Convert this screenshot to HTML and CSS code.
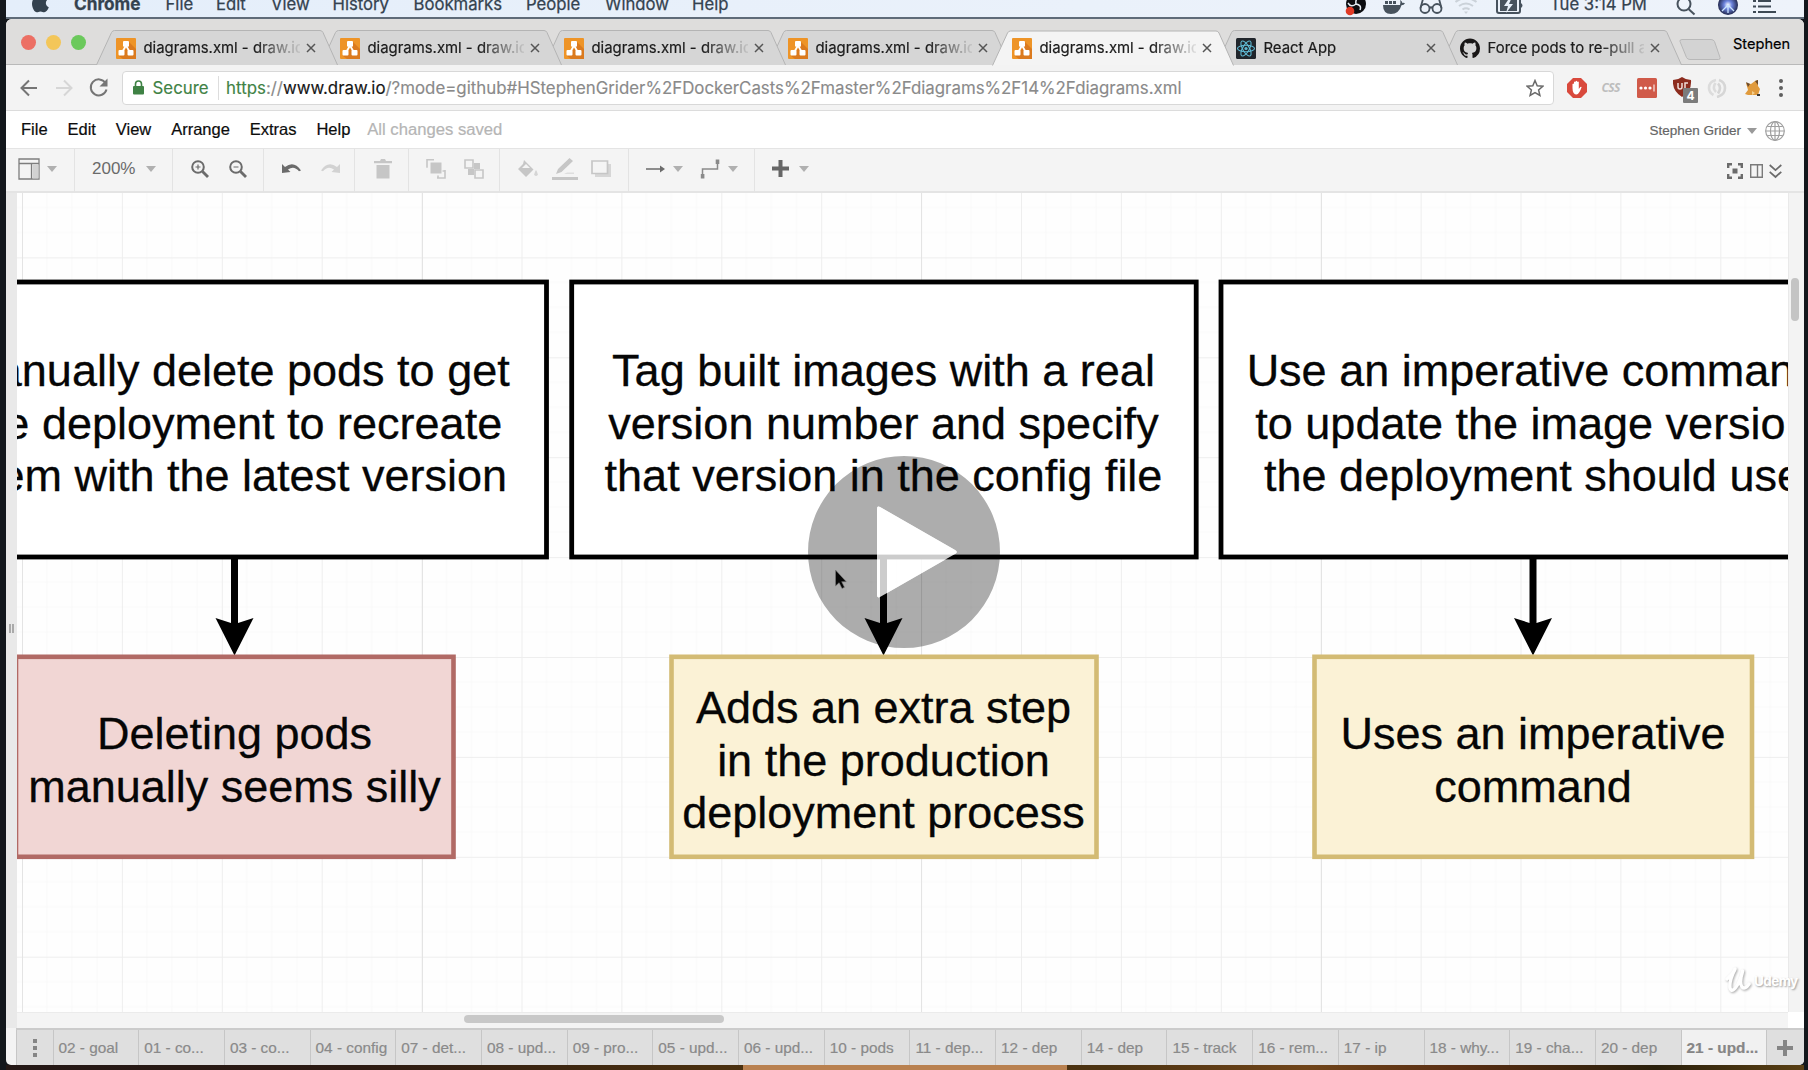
FILE: index.html
```html
<!DOCTYPE html>
<html lang="en">
<head>
<meta charset="utf-8">
<title>diagrams.xml - draw.io</title>
<link rel="stylesheet" href="styles.css">
</head>
<body>
<svg width="0" height="0" class="defs">
  <defs>
    <symbol id="drawio" viewBox="0 0 20 21"><rect width="20" height="21" rx="1" fill="#ee9427"/><path d="M12 3l8 8v10H7l-4-3 7-7z" fill="#db7a1e"/><path d="M10 7.5L6 14.500M10 7.500L14 14.500" stroke="#fff" stroke-width="1.800"/><rect x="7" y="3" width="6" height="5.800" rx="1" fill="#fff"/><rect x="2.500" y="12" width="6" height="5.500" rx="1" fill="#fff"/><rect x="11.500" y="12" width="6" height="5.500" rx="1" fill="#fff"/></symbol>
    <symbol id="close" viewBox="0 0 10 10"><path d="M1 1l8 8M9 1L1 9" stroke="#555" stroke-width="1.500"/></symbol>
    <symbol id="tab" viewBox="0 0 242 35"><path d="M.5 35L15.500 2.500Q16.500.5 18.500.5H224Q226 .5 227 2.500L241.500 35" stroke="#b4b4b4"/></symbol>
    <symbol id="caret" viewBox="0 0 10 6"><path d="M0 0h10L5 6z"/></symbol>
  </defs>
</svg>

<header class="mac-bar">
  <svg class="apple" width="17" height="22" viewBox="0 0 17 22" fill="#34424f"><path d="M12 6c2 0 3.500.8 4.300 2-3.800 2.300-2.900 7 .5 8.300C15.800 19 14 21.300 12.300 21.300c-1.500 0-2-.9-3.800-.9s-2.300.9-3.700.9C2.500 21.300 0 17 0 12.800 0 8.500 2.500 6.200 5 6.200c1.500 0 2.700.9 3.600.9S10.500 6 12 6z"/></svg>
  <b>Chrome</b><span>File</span><span>Edit</span><span>View</span><span>History</span><span>Bookmarks</span><span>People</span><span>Window</span><span>Help</span>
  <div class="mac-status">
    <svg width="22" height="22" viewBox="0 0 22 22"><circle cx="11" cy="10" r="10" fill="#0c0d10"/><path d="M11 10q-1-6 4-6M11 10q6 1 4 6M11 10q-5 4-8-1" fill="none" stroke="#e6edf3" stroke-width="1.500"/><circle cx="5" cy="17" r="4.300" fill="#e03a26"/></svg>
    <svg width="22" height="22" viewBox="0 0 22 22" fill="#47525d"><path d="M0 11h17q1-3 0-5 2 1 2.500 3 1.500-.5 2.500.3-1 2-3.500 2Q16 20 8 20 0 20 0 11zM2 7h3v3H2zM6 7h3v3H6zM10 7h3v3h-3z"/></svg>
    <svg width="24" height="22" viewBox="0 0 24 22" fill="none" stroke="#47525d" stroke-width="1.800"><circle cx="6" cy="14.500" r="4.500"/><circle cx="18" cy="14.500" r="4.500"/><path d="M10.500 14q1.500-1.500 3 0M1.500 14L4 5M22.500 14L20 5"/></svg>
    <svg width="24" height="22" viewBox="0 0 24 22" fill="none" stroke="#cbd2d9" stroke-width="2"><path d="M1.500 8q10.500-8 21 0M5 12q7-5 14 0M8.500 15.500q3.500-2.500 7 0"/><path d="M10 17.500h4l-2 2.500z" fill="#cbd2d9" stroke="none"/></svg>
    <svg width="28" height="22" viewBox="0 0 28 22"><rect x="1" y="4" width="23" height="15" rx="2" fill="none" stroke="#47525d" stroke-width="2"/><path d="M4 6h17v11H4zM25 9q3 2.500 0 5z" fill="#47525d"/><path d="M14 3l-6 9h4l-2 7 7-9h-4l3-7z" fill="#e9f1fa"/></svg>
    <time>Tue 3:14 PM</time>
    <svg width="20" height="22" viewBox="0 0 20 22" fill="none" stroke="#47525d" stroke-width="2"><circle cx="8" cy="10" r="6.500"/><path d="M12.500 15l6 5.500"/></svg>
    <svg width="22" height="22" viewBox="0 0 22 22"><defs><radialGradient id="siri"><stop offset="0" stop-color="#fff"/><stop offset=".4" stop-color="#6c83dd"/><stop offset="1" stop-color="#22294f"/></radialGradient></defs><circle cx="11" cy="11" r="10" fill="url(#siri)"/><path d="M11 11L5 17M11 11l6 6M11 11v8" stroke="#c9e3ff" stroke-width="1.300"/></svg>
    <svg width="23" height="22" viewBox="0 0 23 22" stroke="#3d4954" stroke-width="2.200"><path d="M0 7h3M5 7h13M0 12.500h3M5 12.500h13M0 18h3M5 18h18"/></svg>
  </div>
</header>

<main class="window">
  <div class="strip">
    <div class="lights"><i></i><i></i><i></i></div>
    <nav class="tabs">
      <div class="tab z5"><svg class="shape"><use href="#tab"/></svg><svg class="fav"><use href="#drawio"/></svg><span>diagrams.xml - draw.io</span><svg class="x"><use href="#close"/></svg></div>
      <div class="tab z4"><svg class="shape"><use href="#tab"/></svg><svg class="fav"><use href="#drawio"/></svg><span>diagrams.xml - draw.io</span><svg class="x"><use href="#close"/></svg></div>
      <div class="tab z3"><svg class="shape"><use href="#tab"/></svg><svg class="fav"><use href="#drawio"/></svg><span>diagrams.xml - draw.io</span><svg class="x"><use href="#close"/></svg></div>
      <div class="tab z2"><svg class="shape"><use href="#tab"/></svg><svg class="fav"><use href="#drawio"/></svg><span>diagrams.xml - draw.io</span><svg class="x"><use href="#close"/></svg></div>
      <div class="tab active"><svg class="shape"><use href="#tab"/></svg><svg class="fav"><use href="#drawio"/></svg><span>diagrams.xml - draw.io</span><svg class="x"><use href="#close"/></svg></div>
      <div class="tab z2"><svg class="shape"><use href="#tab"/></svg>
        <svg class="fav" viewBox="0 0 20 21"><rect width="20" height="21" rx="1.500" fill="#20252b"/><g fill="none" stroke="#5fb9d3" stroke-width="1.100"><ellipse cx="10" cy="10.500" rx="8.500" ry="3.300"/><ellipse cx="10" cy="10.500" rx="8.500" ry="3.300" transform="rotate(60 10 10.500)"/><ellipse cx="10" cy="10.500" rx="8.500" ry="3.300" transform="rotate(120 10 10.500)"/></g><circle cx="10" cy="10.500" r="1.600" fill="#5fb9d3"/></svg>
        <span>React App</span><svg class="x"><use href="#close"/></svg></div>
      <div class="tab z1"><svg class="shape"><use href="#tab"/></svg>
        <svg class="fav" viewBox="0 0 16 16"><path fill="#191717" d="M8 0C3.580 0 0 3.580 0 8c0 3.540 2.290 6.530 5.470 7.590.4.070.55-.17.55-.38 0-.19-.01-.82-.01-1.490-2.010.37-2.530-.49-2.690-.94-.09-.23-.48-.94-.82-1.130-.28-.15-.68-.52-.01-.53.63-.01 1.080.58 1.230.82.72 1.210 1.870.87 2.330.66.07-.52.28-.87.51-1.070-1.780-.2-3.640-.89-3.640-3.950 0-.87.31-1.590.82-2.150-.08-.2-.36-1.020.08-2.120 0 0 .67-.21 2.200.82.64-.18 1.320-.27 2-.27s1.360.09 2 .27c1.530-1.040 2.200-.82 2.200-.82.44 1.100.16 1.920.08 2.120.51.56.82 1.270.82 2.150 0 3.070-1.870 3.750-3.650 3.950.29.25.54.73.54 1.480 0 1.070-.01 1.930-.01 2.200 0 .21.15.46.55.38A8.010 8.010 0 0016 8c0-4.420-3.580-8-8-8z"/></svg>
        <span>Force pods to re-pull always</span><svg class="x"><use href="#close"/></svg></div>
    </nav>
    <svg class="newtab" width="42" height="21" viewBox="0 0 42 21"><path d="M3 .5h29q2.500 0 3.500 2l5.500 16q.5 2-1.500 2H11q-2.500 0-3.500-2L1 2.500Q.5.500 3 .5z" fill="#d3d3d3" stroke="#b8b8b8"/></svg>
    <span class="profile">Stephen</span>
  </div>

  <div class="address">
    <svg class="nav-icons" width="92" height="24" viewBox="0 0 92 24" fill="none" stroke-width="2"><path d="M17 12H2.500M9 4.500L1.500 12 9 19.500" stroke="#757575"/><path d="M36 12h14.500M44 4.500l7.500 7.500-7.500 7.500" stroke="#d6d6d6"/><path d="M85.500 7A8 8 0 1 0 86.500 13.500" stroke="#757575"/><path d="M87.500 2.500v8h-8z" fill="#757575"/></svg>
    <div class="url">
      <svg width="11" height="15" viewBox="0 0 11 15"><rect y="6" width="11" height="8.500" rx="1" fill="#3f8245"/><path d="M2.500 7V4a3 3 0 0 1 6 0v3" fill="none" stroke="#3f8245" stroke-width="1.600"/></svg>
      <span class="secure">Secure</span>
      <span class="link"><em>https</em>://<strong>www.draw.io</strong>/?mode=github#HStephenGrider%2FDockerCasts%2Fmaster%2Fdiagrams%2F14%2Fdiagrams.xml</span>
      <svg class="star" width="18" height="18" viewBox="0 0 18 18"><path d="M9 1.500l2.200 5.200 5.600.5-4.200 3.700 1.300 5.500L9 13.500l-4.900 2.900 1.300-5.500L1.200 7.200l5.600-.5z" fill="none" stroke="#6a6a6a" stroke-width="1.500"/></svg>
    </div>
    <div class="extensions">
      <svg width="20" height="20" viewBox="0 0 20 20"><path d="M6 0h8l6 6v8l-6 6H6l-6-6V6z" fill="#d9493c"/><path d="M5.500 10V6q1-1 1.500 0v3V4q1-1 1.600 0v4.500V3.300q1-1 1.600 0v5.200V4q1-1 1.600 0v7l1.500-2q1.400-.6 1.200.6-2 6-4.700 7-4.300 0-4.300-6.600z" fill="#fff"/></svg>
      <span class="css">CSS</span>
      <svg width="20" height="20" viewBox="0 0 20 20"><rect width="20" height="20" rx="1.500" fill="#d05a49"/><g fill="#fff"><circle cx="4" cy="10" r="1.600"/><circle cx="8.500" cy="10" r="1.600"/><circle cx="13" cy="10" r="1.600"/><path d="M16.500 6.500h1v7h-1z"/></g></svg>
      <svg width="26" height="26" viewBox="0 0 26 26"><path d="M0 3q5 0 9-3 4 3 9 3 1 11-9 17Q-1 14 0 3z" fill="#8c2c1e"/><path d="M5 6v4q0 2 2 2t2-2V6M12 12V6h3" fill="none" stroke="#f0dcd8" stroke-width="1.500"/><rect x="10" y="11" width="15" height="15" rx="1" fill="#7b7b7b"/><text x="17.500" y="23" class="count">4</text></svg>
      <svg width="20" height="20" viewBox="0 0 20 20" fill="none" stroke-width="2.600"><path d="M9 2Q2 3.500 2 10q0 4.500 4.500 7M8.500 5q-3.500 5 .5 9" stroke="#dcdcdc"/><path d="M12 2q6 2 6 8 0 7-8 9M11 5.500q4 4 0 10" stroke="#d6d6d6"/></svg>
      <svg width="16" height="18" viewBox="0 0 16 18"><path d="M1 4l5 1 4-3 3-1v6l2 3-2 6H3L0 15l3-4z" fill="#e09a3c"/><path d="M1 3l4 2-2 3zM10 2l3-1v5z" fill="#6b4a2c"/><path d="M7 12l3 2-3 2z" fill="#f4cf8e"/><path d="M12 15h3v2h-3z" fill="#3c3a38"/></svg>
      <svg width="4" height="18" viewBox="0 0 4 18" fill="#5f5f5f"><circle cx="2" cy="2" r="2"/><circle cx="2" cy="9" r="2"/><circle cx="2" cy="16" r="2"/></svg>
    </div>
  </div>

  <div class="menu">
    <span>File</span><span>Edit</span><span>View</span><span>Arrange</span><span>Extras</span><span>Help</span><span class="saved">All changes saved</span>
    <div class="user">Stephen Grider
      <svg class="caret"><use href="#caret"/></svg>
      <svg width="20" height="20" viewBox="0 0 20 20" fill="none" stroke="#a0a0a0" stroke-width="1.200"><circle cx="10" cy="10" r="9.300"/><ellipse cx="10" cy="10" rx="4.500" ry="9.300"/><path d="M10 .7v18.600M.7 10h18.600M2.300 5.500h15.400M2.300 14.500h15.400"/></svg>
    </div>
  </div>

  <div class="toolbar">
    <div class="group g1"><svg width="22" height="22" viewBox="0 0 22 22" fill="none" stroke="#7d7d7d" stroke-width="1.300"><path d="M1 1h20v20H1zM1 5.500h20M13.500 5.500V21"/><path d="M14.500 6.500h6v14h-6z" fill="#d2d2d2" stroke="none"/></svg><svg class="caret"><use href="#caret"/></svg></div>
    <div class="group g2"><span>200%</span><svg class="caret"><use href="#caret"/></svg></div>
    <div class="group g3">
      <svg width="18" height="18" viewBox="0 0 18 18" fill="none" stroke="#6b6b6b"><circle cx="7" cy="7" r="5.800" stroke-width="2"/><path d="M11.500 11.500l5.500 5.500" stroke-width="2.800"/><path d="M4.500 7h5M7 4.500v5" stroke-width="1.200"/></svg>
      <svg width="18" height="18" viewBox="0 0 18 18" fill="none" stroke="#6b6b6b"><circle cx="7" cy="7" r="5.800" stroke-width="2"/><path d="M11.500 11.500l5.500 5.500" stroke-width="2.800"/><path d="M4.500 7h5" stroke-width="1.200"/></svg>
    </div>
    <div class="group g4">
      <svg width="20" height="12" viewBox="0 0 20 12"><path d="M0 1l3 3Q12-3 19 7.500l-2 .8Q12 2 6 6.500L8.500 9 0 10z" fill="#6b6b6b"/></svg>
      <svg width="20" height="12" viewBox="0 0 20 12"><path d="M20 1l-3 3Q8-3 1 7.500l2 .8Q8 2 14 6.500L11.500 9l8.500 1z" fill="#d2d2d2"/></svg>
    </div>
    <div class="group g5"><svg width="18" height="20" viewBox="0 0 18 20" fill="#c6c6c6"><path d="M0 2h6l1-2h4l1 2h6v2.200H0zM2.500 6h13v13.500h-13z"/></svg></div>
    <div class="group g6">
      <svg width="20" height="20" viewBox="0 0 20 20"><path d="M4.500 3.500h11v11h-11z" fill="#c6c6c6"/><path d="M8 .8H1v8M19 11v8h-8M19 12h-2.500M12 19v-2.500" fill="none" stroke="#c6c6c6" stroke-width="1.600"/></svg>
      <svg width="20" height="20" viewBox="0 0 20 20" fill="none" stroke="#c6c6c6" stroke-width="1.600"><path d="M1 1h8v8H1zM11 11h8v8h-8z"/><path d="M10 4h6v6h-6v6H4v-6h6z" fill="#c6c6c6" stroke="none"/></svg>
    </div>
    <div class="group g7">
      <svg width="22" height="20" viewBox="0 0 22 20"><path d="M7 1l9.500 9.500-7.500 7.500L1 10l5-5z" fill="#c6c6c6"/><path d="M5 9l4-4 4 4z" fill="#f4f4f4"/><path d="M19 11q3.500 5.500 0 6-3.500-.5 0-6z" fill="#d5d5d5"/></svg>
      <svg width="26" height="22" viewBox="0 0 26 22" fill="#c6c6c6"><path d="M4 16l2-5L17.500 0l3.500 3L9.500 14zM0 19h26v3H0z"/><path d="M12 16l3-1.500h7V16z" fill="#dedede"/></svg>
      <svg width="20" height="17" viewBox="0 0 20 17"><path d="M4 4h16v13H4z" fill="#d6d6d6"/><path d="M1 1h15.500v12.500H1z" fill="#f4f4f4" stroke="#c6c6c6" stroke-width="1.700"/></svg>
    </div>
    <div class="group g8">
      <svg width="19" height="8" viewBox="0 0 19 8"><path d="M0 4h15" stroke="#6b6b6b" stroke-width="1.500"/><path d="M14 .5l5 3.500-5 3.500z" fill="#6b6b6b"/></svg><svg class="caret"><use href="#caret"/></svg>
      <svg class="conn" width="20" height="20" viewBox="0 0 20 20"><path d="M2.500 17v-7h15V3" fill="none" stroke="#8a8a8a" stroke-width="1.500"/><rect x=".8" y="15" width="3.600" height="4.500" fill="#8a8a8a"/><rect x="15.700" y=".5" width="3.600" height="4.500" fill="#8a8a8a"/></svg><svg class="caret"><use href="#caret"/></svg>
    </div>
    <div class="group g9"><svg width="17" height="17" viewBox="0 0 17 17"><path d="M8.500 0v17M0 8.500h17" stroke="#666" stroke-width="4"/></svg><svg class="caret"><use href="#caret"/></svg></div>
    <div class="view-tools">
      <svg width="16" height="16" viewBox="0 0 16 16" fill="none" stroke="#6b6b6b" stroke-width="2.400"><path d="M1.200 5V1.200H5M11 1.200h3.800V5M14.800 11v3.800H11M5 14.800H1.200V11"/><path d="M5.500 5.500h5v5h-5z" fill="#6b6b6b" stroke="none"/></svg>
      <svg width="13" height="14" viewBox="0 0 13 14" fill="none" stroke="#7a7a7a" stroke-width="1.400"><path d="M.7.7h11.600v12.600H.7zM7.500.7v12.600"/></svg>
      <svg width="13" height="15" viewBox="0 0 13 15" fill="none" stroke="#6b6b6b" stroke-width="1.700"><path d="M.7 1l5.800 5.200L12.300 1M.7 7.800L6.500 13l5.800-5.200"/></svg>
    </div>
  </div>

  <div class="workspace">
    <div class="splitter"><i></i><i></i></div>
    <svg class="diagram" viewBox="17 193 1771 819">
      <defs>
        <pattern id="grid" x="22" y="157.500" width="99.900" height="99.900" patternUnits="userSpaceOnUse">
          <path d="M25 0v99.900M50 0v99.900M75 0v99.900M0 25h99.900M0 50h99.900M0 75h99.900" stroke="#f9f9f9"/>
          <path d="M.5 0v99.900M0 .5h99.900" stroke="#eee"/>
        </pattern>
      </defs>
      <rect x="17" y="193" width="1771" height="819" fill="#fefefe"/>
      <rect x="17" y="193" width="1771" height="819" fill="url(#grid)"/>
      <path class="page-edge" d="M22.500 193v819M122.500 0M422.500 193v819M921.500 193v819M1321.500 193v819"/>
      <g class="option">
        <rect x="-79" y="282" width="625.500" height="275"/>
        <rect x="571.700" y="282" width="624.500" height="275"/>
        <rect x="1221" y="282" width="626" height="275"/>
      </g>
      <g class="arrow">
        <path d="M231 557v66l-15.500-5L234.500 655.500 253.500 618l-15.500 5v-66z"/>
        <path d="M880 557v66l-15.500-5L883.500 655.500 902.500 618l-15.500 5v-66z"/>
        <path d="M1529.500 557v66l-15.500-5L1533 655.500 1552 618l-15.500 5v-66z"/>
      </g>
      <rect class="bad" x="16" y="656.800" width="437.500" height="200"/>
      <rect class="ok" x="671.500" y="656.800" width="425" height="200"/>
      <rect class="ok" x="1314.500" y="656.800" width="437.500" height="200"/>
      <g class="label">
        <text x="234.500" y="385.900">Manually delete pods to get</text><text x="234.500" y="438.500">the deployment to recreate</text><text x="234.500" y="491">them with the latest version</text>
        <text x="883.500" y="385.900">Tag built images with a real</text><text x="883.500" y="438.500">version number and specify</text><text x="883.500" y="491">that version in the config file</text>
        <text x="1533" y="385.900">Use an imperative command</text><text x="1533" y="438.500">to update the image version</text><text x="1533" y="491">the deployment should use</text>
        <text x="234.500" y="749.300">Deleting pods</text><text x="234.500" y="801.900">manually seems silly</text>
        <text x="883.500" y="723">Adds an extra step</text><text x="883.500" y="775.600">in the production</text><text x="883.500" y="828.200">deployment process</text>
        <text x="1533" y="749.300">Uses an imperative</text><text x="1533" y="801.900">command</text>
      </g>
      <path d="M835.500 570v16l3.600-3.300 2.900 5.800 2.500-1.200-2.800-5.600h4.600z" fill="#0a0a0a" stroke="#b9b9b9" stroke-width=".6"/>
      <path fill-rule="evenodd" fill="#000" fill-opacity=".322" d="M904 456a96 96 0 1 0 0 192 96 96 0 0 0 0-192zM877 509q0-3.500 3-2l75 43q3.500 2 0 4l-75 43q-3 1.500-3-2z"/>
      <path fill="#fff" fill-opacity=".8" d="M877 509q0-3.500 3-2l75 43q3.500 2 0 4l-75 43q-3 1.500-3-2z"/>
    </svg>
    <div class="vscroll"><i></i></div>
    <div class="hscroll"><i></i></div>
    <div class="corner"></div>
    <div class="watermark">
      <svg width="26" height="27" viewBox="0 0 26 27"><path d="M2 12Q9 6 10 2 4 14 5 21q2 6 8-4Q17 9 17.500 4 14 16 17 20q3 3 7-3" fill="none" stroke="#fff" stroke-width="3.400" stroke-linecap="round" stroke-linejoin="round"/></svg>
      <span>Udemy</span>
    </div>
  </div>

  <footer class="pages">
    <div class="more"><svg width="4" height="18" viewBox="0 0 4 18" fill="#858585"><path d="M0 0h4v4H0zM0 7h4v4H0zM0 14h4v4H0z"/></svg></div>
    <span>02 - goal</span><span>01 - co...</span><span>03 - co...</span><span>04 - config</span><span>07 - det...</span><span>08 - upd...</span><span>09 - pro...</span><span>05 - upd...</span><span>06 - upd...</span><span>10 - pods</span><span>11 - dep...</span><span>12 - dep</span><span>14 - dep</span><span>15 - track</span><span>16 - rem...</span><span>17 - ip</span><span>18 - why...</span><span>19 - cha...</span><span>20 - dep</span><span class="current">21 - upd...</span>
    <div class="add"><svg width="16" height="16" viewBox="0 0 16 16"><path d="M8 0v16M0 8h16" stroke="#858585" stroke-width="4"/></svg></div>
  </footer>
</main>
<div class="dock"></div>
</body>
</html>
```
FILE: styles.css
```css
* { box-sizing: border-box; }
body {
  margin: 0;
  width: 1808px;
  height: 1070px;
  overflow: hidden;
  padding: 0 4px 0 6px;
  display: flex;
  flex-direction: column;
  background: #13171c;
  font-family: "Liberation Sans", Arial, sans-serif;
}
svg { display: block; flex: none; }
.defs { position: absolute; }

/* system menu bar, scrolled partly off the top */
.mac-bar {
  flex: none;
  height: 19px;
  padding-left: 26px;
  display: grid;
  grid-template-columns: 42px 91.5px 50.5px 55px 61.5px 81px 112.5px 79px 87px 60px 1fr;
  grid-template-rows: 17px;
  background: linear-gradient(90deg, #e4eefa, #eef3fa);
  border-bottom: 2px solid #5f6b78;
  color: #34424f;
  font: 16.7px/20px Inter, sans-serif;
  overflow: hidden;
}
.mac-bar > b, .mac-bar > span, .mac-bar time { margin-top: -6px; white-space: nowrap; -webkit-text-stroke: .25px; }
.mac-bar b { font-size: 17.2px; }
.mac-bar .mac-status time { margin-top: 0; }
.apple { margin-top: -9px; }
.mac-status { display: flex; margin: -6px 28px 0 0; justify-content: flex-end; height: 22px; }
.mac-status time { margin: 0 29px 0 26px; width: 97px; }
.mac-status svg + svg { margin-left: 16px; }
.mac-status svg:nth-of-type(3) { margin-left: 14px; }
.mac-status svg:nth-of-type(4) { margin-left: 11px; }
.mac-status svg:nth-of-type(5) { margin-left: 18px; }
.mac-status svg:nth-of-type(7) { margin-left: 21px; }
.mac-status svg:nth-of-type(8) { margin-left: 14px; }

.window {
  flex: none;
  height: 1046px;
  display: flex;
  flex-direction: column;
  border-radius: 6px 6px 5px 5px;
  overflow: hidden;
  background: #f3f3f3;
}

/* browser tabs */
.strip {
  flex: none;
  height: 46px;
  padding-top: 11px;
  display: flex;
  background: #dedddc;
  border-bottom: 1px solid #b9b9b9;
}
.lights { width: 90px; padding: 5px 0 0 15px; display: flex; gap: 10px; }
.lights i { width: 15px; height: 15px; border-radius: 50%; background: #ec6f64; }
.lights i:nth-child(2) { background: #f3c659; }
.lights i:nth-child(3) { background: #6bc95c; }
.tabs { display: flex; height: 35px; }
.tab {
  position: relative;
  width: 242px;
  height: 35px;
  margin-right: -18px;
  padding: 1px 0 0 20px;
  display: flex;
  align-items: center;
  font: 14.9px/20px Inter, sans-serif;
  color: #1b1b1b;
  -webkit-text-stroke: .2px;
}
.tab > * { position: relative; }
.tab .shape { position: absolute; left: 0; top: 0; width: 242px; height: 35px; fill: #d6d6d6; }
.tab .fav { width: 20px; height: 21px; }
.tab span {
  width: 156px;
  margin-left: 7.5px;
  overflow: hidden;
  white-space: nowrap;
  -webkit-mask-image: linear-gradient(90deg, #000 112px, transparent 160px);
  mask-image: linear-gradient(90deg, #000 112px, transparent 160px);
}
.tab .x { width: 10px; height: 10px; margin-left: 6.5px; }
.z5 { z-index: 5; } .z4 { z-index: 4; } .z3 { z-index: 3; } .z2 { z-index: 2; } .z1 { z-index: 1; }
.tab.active { z-index: 9; }
.tab.active .shape { fill: #f4f4f4; height: 36px; }
.newtab { margin: 9px 0 0 15px; }
.profile { margin: 5px 0 0 12px; font: 14.6px/18px Inter, sans-serif; -webkit-text-stroke: .2px; }

/* address row */
.address { flex: none; height: 46px; display: flex; align-items: center; padding: 0 20px 0 14px; border-bottom: 1px solid #dcdcdc; }
.nav-icons { margin-right: 9.5px; }
.url {
  width: 1432px;
  height: 34px;
  padding: 0 9px 0 10px;
  display: flex;
  align-items: center;
  background: #fff;
  border: 1px solid #d8d8d8;
  border-radius: 4px;
  font: 16.85px/24px Inter, sans-serif;
  color: #8a8a8a;
}
.secure { margin-left: 9px; padding-right: 9px; border-right: 1px solid #ddd; color: #3f8245; -webkit-text-stroke: .15px; }
.link { margin-left: 7.5px; white-space: nowrap; -webkit-text-stroke: .15px; }
.link em { font-style: normal; color: #3f8245; }
.link strong { font-weight: 400; color: #161616; }
.star { margin-left: auto; }
.extensions { flex: 1; display: flex; align-items: center; margin-left: 13px; }
.css { margin: 0 15px 0 15px; color: #bdbdbd; font: italic bold 12px/16px "Open Sans", sans-serif; letter-spacing: -.6px; width: 20px; }
.extensions svg:nth-of-type(3) { margin: 5px 0 0 16px; }
.extensions svg:nth-of-type(4) { margin-left: 8px; }
.extensions svg:nth-of-type(5) { margin-left: 18px; }
.extensions svg:nth-of-type(6) { margin-left: auto; margin-right: 1px; }
.count { fill: #fff; font: bold 12px Inter, sans-serif; text-anchor: middle; }

/* draw.io menu */
.menu {
  flex: none;
  height: 38px;
  padding: 0 19px 0 15px;
  display: flex;
  align-items: center;
  gap: 19.9px;
  background: #fff;
  border-bottom: 1px solid #e4e4e4;
  font-size: 16.5px;
  color: #0c0c0c;
  -webkit-text-stroke: .2px;
}
.saved { margin-left: -3px; color: #b5b5b5; font-size: 16.65px; }
.user { margin-left: auto; display: flex; align-items: center; font-size: 13.5px; color: #666; padding-top: 2px; }
.caret { width: 10px; height: 6px; fill: #b0b0b0; }
.user .caret { margin: 0 8px 0 6px; fill: #999; }

.toolbar { flex: none; height: 44px; display: flex; background: #f4f4f4; border-bottom: 2px solid #e4e4e4; color: #6a6a6a; font-size: 17px; }
.group { height: 43px; padding-bottom: 4px; display: flex; align-items: center; border-right: 1px solid #e3e3e3; }
.g1 { width: 69px; padding-left: 12px; gap: 7px; }
.g2 { width: 98px; padding-left: 17px; gap: 11px; }
.g3 { width: 91px; padding-left: 18px; gap: 20px; }
.g4 { width: 91px; padding-left: 18px; gap: 18px; }
.g5 { width: 54px; padding-left: 19px; }
.g6 { width: 91px; padding-left: 17px; gap: 18px; }
.g7 { width: 129px; padding-left: 17px; gap: 13px; }
.g8 { width: 126px; padding-left: 17px; gap: 8px; }
.g8 .conn { margin-left: 9px; }
.g9 { padding-left: 17px; gap: 10px; border: 0; }
.view-tools { margin-left: auto; padding: 2px 22px 0 0; display: flex; align-items: center; gap: 6.5px; }

/* drawing surface */
.workspace {
  flex: none;
  height: 835px;
  position: relative;
  display: grid;
  grid-template: 819px 16px / 11px 1771px 1fr;
  background: #e9e9e9;
}
.splitter { grid-row: 1 / 3; display: flex; justify-content: center; align-items: center; gap: 1px; padding-top: 36px; background: #e9e9e9; }
.splitter i { width: 2px; height: 9px; background: #aaa; }
.diagram { width: 1771px; height: 819px; overflow: hidden; }
.page-edge { stroke: #e4e4e4; }
.option rect { fill: #fff; stroke: #000; stroke-width: 4.8px; }
.bad { fill: #f1d6d4; stroke: #b16a65; stroke-width: 4.6px; }
.ok { fill: #fbf2d6; stroke: #d3bb74; stroke-width: 4.6px; }
.arrow { fill: #000; }
.label { font-size: 45px; text-anchor: middle; fill: #060606; stroke: #060606; stroke-width: .3px; }
.vscroll { background: #f3f3f3; border-left: 1px solid #e9e9e9; padding: 85px 0 0 2px; }
.vscroll i { display: block; width: 8px; height: 43px; border-radius: 4px; background: #c4c4c4; }
.hscroll { grid-column: 2; background: #f4f4f4; border-top: 1px solid #ebebeb; padding: 2px 0 0 447px; }
.hscroll i { display: block; width: 260px; height: 8px; border-radius: 4px; background: #c8c8c8; }
.corner { background: #fff; }
.watermark {
  position: absolute;
  left: 1719px;
  top: 774px;
  display: flex;
  align-items: center;
  gap: 3px;
  color: #fff;
  font: bold 13.5px/20px Inter, sans-serif;
  letter-spacing: -.6px;
  text-shadow: 1px 1px 2px #999;
}
.watermark svg { filter: drop-shadow(1px 1px 1px #aaa); }

/* page tabs */
.pages {
  flex: none;
  height: 37px;
  margin-left: 10px;
  display: flex;
  background: #dfdfdf;
  border-top: 2px solid #cbcbcb;
  color: #8a8a8a;
  font-size: 15.35px;
  line-height: 36px;
  -webkit-text-stroke: .2px;
}
.pages span { width: 85.7px; padding-left: 5px; border-left: 1px solid #c6c6c6; white-space: nowrap; }
.pages .current { background: #f1f1f1; font-weight: bold; color: #868686; }
.more { width: 36.5px; border-left: 1px solid #c6c6c6; padding: 9px 0 0 16px; }
.add { flex: 1; border-left: 1px solid #c6c6c6; padding: 10px 0 0 10px; }

.dock {
  flex: 1;
  background: linear-gradient(90deg, transparent 737px, #b98150 737px, #b98150 1061px, transparent 1061px), linear-gradient(90deg, #241816, #2c1a12 350px, #4a3010 700px, #4c3312 1100px, #70451a 1300px, #5a2f14 1450px, #2a200c 1650px, #5a4014);
}
```
